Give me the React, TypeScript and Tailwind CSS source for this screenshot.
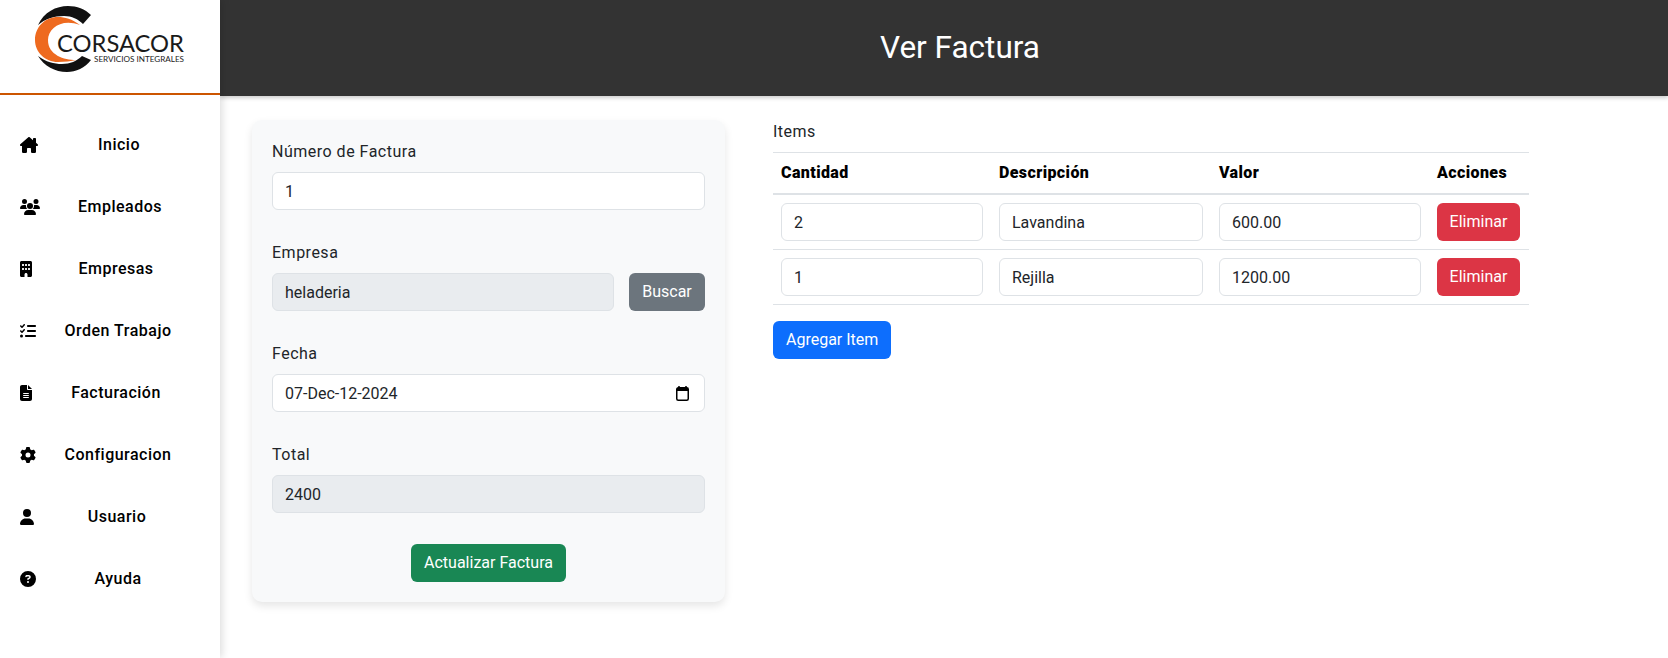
import type { ReactNode } from 'react';
import { FaBuilding, FaCircleQuestion, FaFileLines, FaGear, FaHouseChimney, FaListCheck, FaUser, FaUsers } from 'react-icons/fa6';

const navItems = [
  { label: 'Inicio', icon: <FaHouseChimney className="h-4 w-[18px]" /> },
  { label: 'Empleados', icon: <FaUsers className="h-4 w-5" /> },
  { label: 'Empresas', icon: <FaBuilding className="h-4 w-3" /> },
  { label: 'Orden Trabajo', icon: <FaListCheck className="h-4 w-4" /> },
  { label: 'Facturación', icon: <FaFileLines className="h-4 w-3" /> },
  { label: 'Configuracion', icon: <FaGear className="h-4 w-4" /> },
  { label: 'Usuario', icon: <FaUser className="h-4 w-3.5" /> },
  { label: 'Ayuda', icon: <FaCircleQuestion className="h-4 w-4" /> },
];

const items = [
  { qty: '2', desc: 'Lavandina', value: '600.00' },
  { qty: '1', desc: 'Rejilla', value: '1200.00' },
];

function Logo() {
  return (
    <svg width="220" height="93" viewBox="0 0 220 93" className="block">
      <path d="M38 25C44 12 56 6 68 6C77 6 85 9 91 15L83 24C78 19 72 16 64 16C54 16 45 19 38 25Z" fill="#111" />
      <path d="M38 56C46 62 54 64 62 64C70 64 77 61 82 56L91 60C85 68 76 72 67 72C55 72 44 66 38 56Z" fill="#111" />
      <path d="M80 25C72 19 65 17 58 17C45 17 35 27 35 40C35 52 45 62 58 62C65 62 71 61 76 60C64 60 48 55 48 40C48 28 62 18 80 25Z" fill="#ee6a1f" />
      <text x="57" y="52" textLength="127" lengthAdjust="spacingAndGlyphs" fontFamily="Lato, sans-serif" fontSize="24" fill="#1a1a1a">CORSACOR</text>
      <text x="94" y="62" textLength="90" lengthAdjust="spacingAndGlyphs" fontFamily="Lato, sans-serif" fontSize="8" fill="#222">SERVICIOS INTEGRALES</text>
    </svg>
  );
}

function Sidebar() {
  return (
    <aside className="z-20 flex h-full w-[220px] shrink-0 flex-col bg-white shadow-[2px_0_8px_rgba(0,0,0,0.14)]">
      <div className="h-[95px] border-b-2 border-[#cc5500]">
        <Logo />
      </div>
      <nav className="flex flex-col pt-[19px]">
        {navItems.map((item) => (
          <a key={item.label} className="flex h-[62px] items-center px-5 text-black">
            {item.icon}
            <span className="flex-1 text-center text-base font-medium tracking-[0.5px]">{item.label}</span>
          </a>
        ))}
      </nav>
    </aside>
  );
}

function Field({ label, children }: { label: string; children: ReactNode }) {
  return (
    <div className="mb-[31px]">
      <label className="mb-2 block text-base leading-6 tracking-[0.5px] text-[#212529]">{label}</label>
      {children}
    </div>
  );
}

function TextInput({ value, disabled, className }: { value: string; disabled?: boolean; className?: string }) {
  return (
    <input
      readOnly
      value={value}
      className={`block h-[38px] w-full rounded-md border border-[#dee2e6] px-3 text-base text-[#212529] outline-none ${
        disabled ? 'bg-[#e9ecef]' : 'bg-white'
      } ${className ?? ''}`}
    />
  );
}

function CalendarIcon() {
  return (
    <svg width="13" height="15" viewBox="0 0 13 15" className="absolute right-[16px] top-[12px]">
      <path d="M3 0V2M10 0V2" stroke="#000" strokeWidth="1.5" />
      <rect x="0.75" y="1.75" width="11.5" height="12.5" rx="1.5" fill="none" stroke="#000" strokeWidth="1.5" />
      <rect x="1" y="2" width="11" height="3" fill="#000" />
    </svg>
  );
}

function InvoiceForm() {
  return (
    <div className="w-[473px] shrink-0 self-start rounded-[10px] bg-[#f8f9fa] p-5 shadow-[0_4px_8px_rgba(0,0,0,0.1)]">
      <Field label="Número de Factura">
        <TextInput value="1" />
      </Field>
      <Field label="Empresa">
        <div className="flex gap-[15px]">
          <TextInput value="heladeria" disabled className="flex-1" />
          <button className="h-[38px] w-[76px] shrink-0 rounded-md bg-[#6c757d] text-base text-white">Buscar</button>
        </div>
      </Field>
      <Field label="Fecha">
        <div className="relative">
          <TextInput value="07-Dec-12-2024" />
          <CalendarIcon />
        </div>
      </Field>
      <Field label="Total">
        <TextInput value="2400" disabled />
      </Field>
      <div className="flex justify-center">
        <button className="h-[38px] rounded-md bg-[#198754] px-[13px] text-base text-white">Actualizar Factura</button>
      </div>
    </div>
  );
}

function ItemsTable() {
  return (
    <div className="w-[756px] shrink-0">
      <div className="mb-2 h-6 text-base leading-6 tracking-[0.5px] text-[#212529]">Items</div>
      <table className="w-full table-fixed border-separate border-spacing-0 text-[#212529]">
        <colgroup>
          <col className="w-[218px]" />
          <col className="w-[220px]" />
          <col className="w-[218px]" />
          <col className="w-[100px]" />
        </colgroup>
        <thead>
          <tr className="text-left text-base text-black">
            <th className="border-t border-b-2 border-t-[#dee2e6] border-b-[#dee2e6] p-2 font-black tracking-[0.4px]">Cantidad</th>
            <th className="border-t border-b-2 border-t-[#dee2e6] border-b-[#dee2e6] p-2 font-black tracking-[0.4px]">Descripción</th>
            <th className="border-t border-b-2 border-t-[#dee2e6] border-b-[#dee2e6] p-2 font-black tracking-[0.4px]">Valor</th>
            <th className="border-t border-b-2 border-t-[#dee2e6] border-b-[#dee2e6] p-2 font-black tracking-[0.4px]">Acciones</th>
          </tr>
        </thead>
        <tbody>
          {items.map((item) => (
            <tr key={item.desc}>
              <td className="border-b border-[#dee2e6] p-2"><TextInput value={item.qty} /></td>
              <td className="border-b border-[#dee2e6] p-2"><TextInput value={item.desc} /></td>
              <td className="border-b border-[#dee2e6] p-2"><TextInput value={item.value} /></td>
              <td className="border-b border-[#dee2e6] p-2">
                <button className="block h-[38px] w-[83px] rounded-md bg-[#dc3545] text-base text-white">Eliminar</button>
              </td>
            </tr>
          ))}
        </tbody>
      </table>
      <button className="mt-4 h-[38px] rounded-md bg-[#0d6efd] px-[13px] text-base text-white">Agregar Item</button>
    </div>
  );
}

export default function App() {
  return (
    <div className="flex h-screen overflow-hidden bg-white font-['Roboto',sans-serif]">
      <Sidebar />
      <div className="flex min-w-0 flex-1 flex-col">
        <header className="z-10 flex h-[96px] shrink-0 items-center justify-center bg-[#333333] pl-8 shadow-[0_2px_4px_rgba(0,0,0,0.2)]">
          <h1 className="text-[31.5px] font-normal leading-10 text-white">Ver Factura</h1>
        </header>
        <main className="flex gap-12 pl-8 pt-6">
          <InvoiceForm />
          <ItemsTable />
        </main>
      </div>
    </div>
  );
}
